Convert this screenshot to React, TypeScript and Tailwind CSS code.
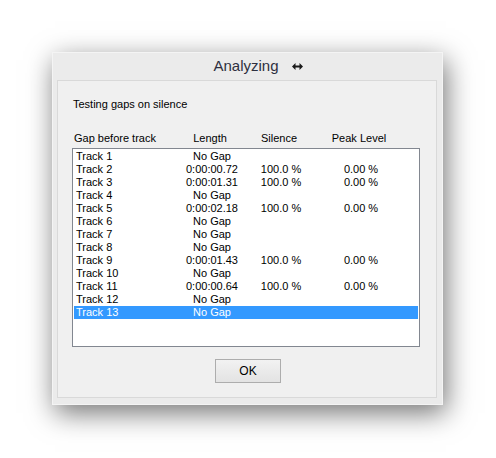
import React from "react";

type Row = { name: string; length: string; silence?: string; peak?: string };

const rows: Row[] = [
  { name: "Track 1", length: "No Gap" },
  { name: "Track 2", length: "0:00:00.72", silence: "100.0 %", peak: "0.00 %" },
  { name: "Track 3", length: "0:00:01.31", silence: "100.0 %", peak: "0.00 %" },
  { name: "Track 4", length: "No Gap" },
  { name: "Track 5", length: "0:00:02.18", silence: "100.0 %", peak: "0.00 %" },
  { name: "Track 6", length: "No Gap" },
  { name: "Track 7", length: "No Gap" },
  { name: "Track 8", length: "No Gap" },
  { name: "Track 9", length: "0:00:01.43", silence: "100.0 %", peak: "0.00 %" },
  { name: "Track 10", length: "No Gap" },
  { name: "Track 11", length: "0:00:00.64", silence: "100.0 %", peak: "0.00 %" },
  { name: "Track 12", length: "No Gap" },
  { name: "Track 13", length: "No Gap" },
];

const cols = "grid grid-cols-[100px_72px_66px_94px]";

export default function App() {
  return (
    <div
      className="w-[496px] h-[458px] bg-white pt-[52px] pl-[52px]"
      style={{ fontFamily: '"Liberation Sans", Arial, sans-serif' }}
    >
      <div className="w-[391px] h-[353px] bg-[#ebebeb] border border-[#f4f4f4] shadow-[3px_8px_26px_rgba(0,0,0,0.55)] flex flex-col">
        {/* title bar */}
        <div className="h-[27px] flex items-center justify-center">
          <span className="relative text-[15px] leading-[18px] text-[#2e3040] -mt-[2px] -ml-[3px]">
            Analyzing
            <svg
              className="absolute left-full top-[6px] ml-[13px]"
              width="11"
              height="7"
              viewBox="0 0 11 7"
            >
              <path d="M0 3.5 L3.5 0 V7 Z M11 3.5 L7.5 0 V7 Z" fill="#1a1a1a" />
              <rect x="2" y="2.5" width="7" height="2" fill="#1a1a1a" />
            </svg>
          </span>
        </div>

        {/* content panel */}
        <div className="ml-[4px] mr-[5px] mb-[6px] flex-1 border border-[#d9d9d9] bg-[#f0f0f0] text-[11px] leading-[13px] text-black flex flex-col">
          <div className="pl-[15px] pt-[17px]">Testing gaps on silence</div>

          <div className={`${cols} ml-[16px] mt-[21px]`}>
            <div>Gap before track</div>
            <div className="text-center">Length</div>
            <div className="text-center">Silence</div>
            <div className="text-center">Peak Level</div>
          </div>

          <div className="ml-[14px] mt-[3px] w-[348px] h-[199px] border border-[#828790] bg-white p-px">
            {rows.map((r, i) => {
              const selected = i === rows.length - 1;
              return (
                <div
                  key={r.name}
                  className={`${cols} h-[13px] pl-[2px] ${
                    selected ? "bg-[#3399ff] text-white" : ""
                  }`}
                >
                  <div>{r.name}</div>
                  <div className="text-center">{r.length}</div>
                  <div className="text-center">{r.silence ?? ""}</div>
                  <div className="text-center">{r.peak ?? ""}</div>
                </div>
              );
            })}
          </div>

          <div className="flex justify-center mt-[12px] pl-[2px]">
            <button className="w-[66px] h-[24px] border border-[#adadad] bg-gradient-to-b from-[#f2f2f2] to-[#e3e3e3] text-[12px] text-black">
              OK
            </button>
          </div>
        </div>
      </div>
    </div>
  );
}
